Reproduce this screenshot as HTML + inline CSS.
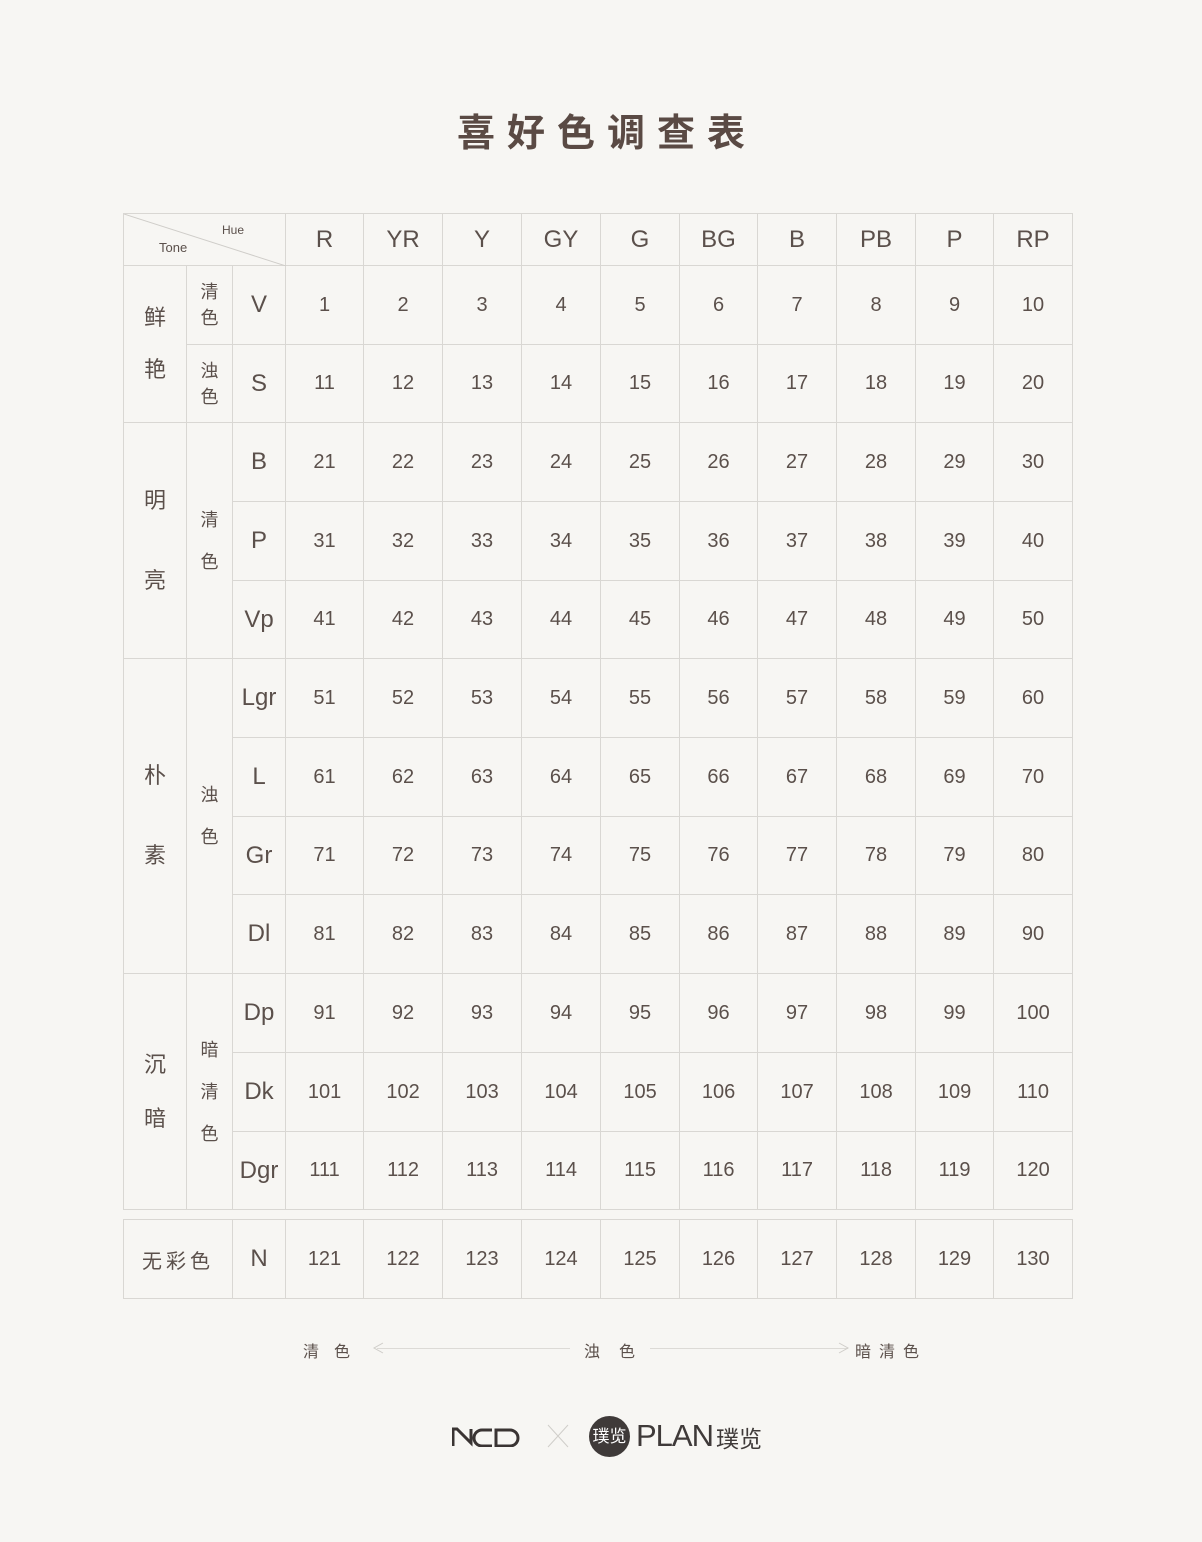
<!DOCTYPE html>
<html><head><meta charset="utf-8"><style>
html,body{margin:0;padding:0;}
body{width:1202px;height:1542px;background:#f7f6f3;position:relative;overflow:hidden;font-family:"Liberation Sans","Noto Sans CJK SC",sans-serif;color:#5b504b;}
.title{position:absolute;top:102px;left:6px;width:1202px;text-align:center;font-size:38px;letter-spacing:12px;color:#5a4a44;font-weight:bold;font-family:"Liberation Sans","Noto Sans CJK SC",sans-serif;}
table{position:absolute;left:123px;border-collapse:collapse;table-layout:fixed;}
td{border:1px solid #d9d7d3;text-align:center;padding:0;font-size:20px;}
.h td{font-size:24px;}
.t{font-size:24px;}
.g{font-size:22px;line-height:52px;}
.s{font-size:18px;line-height:26px;}
.leg{position:absolute;top:1338px;font-size:16px;letter-spacing:8px;color:#5b504b;}
.line{position:absolute;top:1348px;height:1px;background:#dcdad6;}
</style></head><body>
<div class="title">喜好色调查表</div>
<table style="top:213px;width:949px;">
<colgroup><col style="width:63px"><col style="width:46px"><col style="width:53px"><col style="width:78px"><col style="width:79px"><col style="width:79px"><col style="width:79px"><col style="width:79px"><col style="width:78px"><col style="width:79px"><col style="width:79px"><col style="width:78px"><col style="width:79px"></colgroup>
<tr class="h" style="height:52px"><td colspan="3" style="position:relative;">
<svg width="162" height="52" style="position:absolute;left:0;top:0"><line x1="0" y1="0" x2="162" y2="52" stroke="#cfcdc9" stroke-width="1"/></svg>
<span style="position:absolute;left:98px;top:9px;font-size:12px;">Hue</span>
<span style="position:absolute;left:35px;top:26px;font-size:13px;">Tone</span></td>
<td>R</td><td>YR</td><td>Y</td><td>GY</td><td>G</td><td>BG</td><td>B</td><td>PB</td><td>P</td><td>RP</td></tr>
<tr style="height:79px"><td rowspan="2" class="g">鲜<br>艳</td><td class="s">清<br>色</td><td class="t">V</td><td>1</td><td>2</td><td>3</td><td>4</td><td>5</td><td>6</td><td>7</td><td>8</td><td>9</td><td>10</td></tr>
<tr style="height:78px"><td class="s">浊<br>色</td><td class="t">S</td><td>11</td><td>12</td><td>13</td><td>14</td><td>15</td><td>16</td><td>17</td><td>18</td><td>19</td><td>20</td></tr>
<tr style="height:79px"><td rowspan="3" class="g" style="line-height:80px">明<br>亮</td><td rowspan="3" class="s" style="line-height:42px">清<br>色</td><td class="t">B</td><td>21</td><td>22</td><td>23</td><td>24</td><td>25</td><td>26</td><td>27</td><td>28</td><td>29</td><td>30</td></tr>
<tr style="height:79px"><td class="t">P</td><td>31</td><td>32</td><td>33</td><td>34</td><td>35</td><td>36</td><td>37</td><td>38</td><td>39</td><td>40</td></tr>
<tr style="height:78px"><td class="t">Vp</td><td>41</td><td>42</td><td>43</td><td>44</td><td>45</td><td>46</td><td>47</td><td>48</td><td>49</td><td>50</td></tr>
<tr style="height:79px"><td rowspan="4" class="g" style="line-height:80px">朴<br>素</td><td rowspan="4" class="s" style="line-height:42px">浊<br>色</td><td class="t">Lgr</td><td>51</td><td>52</td><td>53</td><td>54</td><td>55</td><td>56</td><td>57</td><td>58</td><td>59</td><td>60</td></tr>
<tr style="height:79px"><td class="t">L</td><td>61</td><td>62</td><td>63</td><td>64</td><td>65</td><td>66</td><td>67</td><td>68</td><td>69</td><td>70</td></tr>
<tr style="height:78px"><td class="t">Gr</td><td>71</td><td>72</td><td>73</td><td>74</td><td>75</td><td>76</td><td>77</td><td>78</td><td>79</td><td>80</td></tr>
<tr style="height:79px"><td class="t">Dl</td><td>81</td><td>82</td><td>83</td><td>84</td><td>85</td><td>86</td><td>87</td><td>88</td><td>89</td><td>90</td></tr>
<tr style="height:79px"><td rowspan="3" class="g" style="line-height:54px">沉<br>暗</td><td rowspan="3" class="s" style="line-height:42px">暗<br>清<br>色</td><td class="t">Dp</td><td>91</td><td>92</td><td>93</td><td>94</td><td>95</td><td>96</td><td>97</td><td>98</td><td>99</td><td>100</td></tr>
<tr style="height:79px"><td class="t">Dk</td><td>101</td><td>102</td><td>103</td><td>104</td><td>105</td><td>106</td><td>107</td><td>108</td><td>109</td><td>110</td></tr>
<tr style="height:78px"><td class="t">Dgr</td><td>111</td><td>112</td><td>113</td><td>114</td><td>115</td><td>116</td><td>117</td><td>118</td><td>119</td><td>120</td></tr>
</table>
<table style="top:1219px;width:949px;">
<colgroup><col style="width:109px"><col style="width:53px"><col style="width:78px"><col style="width:79px"><col style="width:79px"><col style="width:79px"><col style="width:79px"><col style="width:78px"><col style="width:79px"><col style="width:79px"><col style="width:78px"><col style="width:79px"></colgroup>
<tr style="height:79px"><td style="letter-spacing:4px">无彩色</td><td class="t">N</td><td>121</td><td>122</td><td>123</td><td>124</td><td>125</td><td>126</td><td>127</td><td>128</td><td>129</td><td>130</td></tr>
</table>
<div class="leg" style="left:303px;letter-spacing:15px">清色</div>
<div class="leg" style="left:584px;letter-spacing:19px">浊色</div>
<div class="leg" style="left:855px;letter-spacing:8px">暗清色</div>
<div class="line" style="left:377px;width:193px"></div>
<div class="line" style="left:650px;width:198px"></div>
<svg style="position:absolute;left:372px;top:1341px" width="12" height="14"><polyline points="11,2 2,7 11,12" fill="none" stroke="#cfcdc9"/></svg>
<svg style="position:absolute;left:838px;top:1341px" width="12" height="14"><polyline points="1,2 10,7 1,12" fill="none" stroke="#cfcdc9"/></svg>
<svg style="position:absolute;left:452px;top:1425px" width="72" height="22" viewBox="0 0 72 22"><path d="M1 21V4h4l14 14V4" fill="none" stroke="#3a3433" stroke-width="3"/><path d="M40 5H30a8 8 0 0 0 0 16h10" fill="none" stroke="#3a3433" stroke-width="3"/><path d="M44 5h14a8 8 0 0 1 0 16H44z" fill="none" stroke="#3a3433" stroke-width="3"/></svg>
<svg style="position:absolute;left:547px;top:1424px" width="22" height="24"><path d="M1 1L21 23M21 1L1 23" stroke="#d0ceca"/></svg>
<div style="position:absolute;left:589px;top:1416px;width:41px;height:41px;border-radius:50%;background:#3f3a39;color:#fff;font-size:17px;line-height:41px;text-align:center;">璞览</div>
<div style="position:absolute;left:636px;top:1418px;font-size:31px;color:#3f3a39;letter-spacing:-1px;">PLAN</div>
<div style="position:absolute;left:716px;top:1420px;font-size:23px;color:#3f3a39;">璞览</div>
</body></html>
